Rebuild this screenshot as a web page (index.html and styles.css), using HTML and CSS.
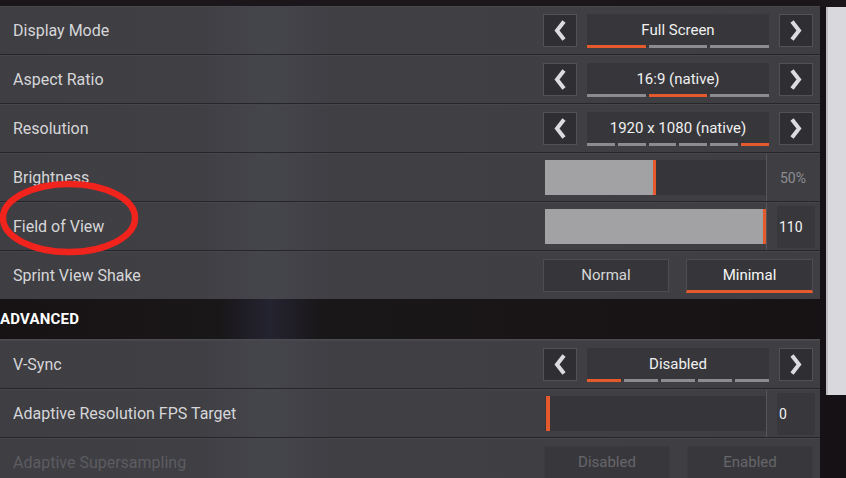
FILE: index.html
```html
<!DOCTYPE html>
<html lang="en">
<head>
  <meta charset="utf-8">
  <title>Video Settings</title>
  <link rel="stylesheet" href="styles.css">
</head>
<body>
  <div class="screen">
    <main class="settings">
      <div class="row">
        <span class="label">Display Mode</span>
        <div class="selector">
          <span class="arrow"><svg viewBox="0 0 12 20"><polyline points="10,1 3,10 10,19"/></svg></span>
          <div class="value">
            <span class="value-text">Full Screen</span>
            <div class="segments"><i class="on"></i><i></i><i></i></div>
          </div>
          <span class="arrow"><svg viewBox="0 0 12 20"><polyline points="2,1 9,10 2,19"/></svg></span>
        </div>
      </div>
      <div class="row">
        <span class="label">Aspect Ratio</span>
        <div class="selector">
          <span class="arrow"><svg viewBox="0 0 12 20"><polyline points="10,1 3,10 10,19"/></svg></span>
          <div class="value">
            <span class="value-text">16:9 (native)</span>
            <div class="segments"><i></i><i class="on"></i><i></i></div>
          </div>
          <span class="arrow"><svg viewBox="0 0 12 20"><polyline points="2,1 9,10 2,19"/></svg></span>
        </div>
      </div>
      <div class="row">
        <span class="label">Resolution</span>
        <div class="selector">
          <span class="arrow"><svg viewBox="0 0 12 20"><polyline points="10,1 3,10 10,19"/></svg></span>
          <div class="value">
            <span class="value-text">1920 x 1080 (native)</span>
            <div class="segments"><i></i><i></i><i></i><i></i><i></i><i class="on"></i></div>
          </div>
          <span class="arrow"><svg viewBox="0 0 12 20"><polyline points="2,1 9,10 2,19"/></svg></span>
        </div>
      </div>
      <div class="row">
        <span class="label">Brightness</span>
        <div class="slider">
          <div class="track"><div class="fill" style="width: 111px"></div></div>
          <div class="slider-value"><span class="num dim">50%</span></div>
        </div>
      </div>
      <div class="row">
        <span class="label">Field of View</span>
        <div class="slider">
          <div class="track"><div class="fill" style="width: 221px"></div></div>
          <div class="slider-value"><span class="num box">110</span></div>
        </div>
      </div>
      <div class="row last">
        <span class="label">Sprint View Shake</span>
        <div class="choice">
          <span class="option">Normal</span>
          <span class="option selected">Minimal</span>
        </div>
      </div>

      <h3 class="section">ADVANCED</h3>

      <div class="row">
        <span class="label">V-Sync</span>
        <div class="selector">
          <span class="arrow"><svg viewBox="0 0 12 20"><polyline points="10,1 3,10 10,19"/></svg></span>
          <div class="value">
            <span class="value-text">Disabled</span>
            <div class="segments"><i class="on"></i><i></i><i></i><i></i><i></i></div>
          </div>
          <span class="arrow"><svg viewBox="0 0 12 20"><polyline points="2,1 9,10 2,19"/></svg></span>
        </div>
      </div>
      <div class="row">
        <span class="label">Adaptive Resolution FPS Target</span>
        <div class="slider">
          <div class="track empty"><div class="fill" style="width: 5px"></div></div>
          <div class="slider-value"><span class="num box">0</span></div>
        </div>
      </div>
      <div class="row disabled">
        <span class="label">Adaptive Supersampling</span>
        <div class="choice">
          <span class="option">Disabled</span>
          <span class="option">Enabled</span>
        </div>
      </div>
    </main>
    <div class="scrollbar"><div class="thumb"></div></div>
  </div>

  <svg class="highlight" width="150" height="90" viewBox="0 0 150 90">
    <ellipse cx="70" cy="41" rx="66" ry="34"/>
  </svg>
</body>
</html>
```

FILE: styles.css
```css
body {
  margin: 0;
  background-color: #151114;
  font-family: Roboto, "DejaVu Sans", sans-serif;
  color: #d6d6d8;
  width: 846px;
  height: 478px;
  overflow: hidden;
  position: relative;
}
.screen {
  display: flex;
  gap: 6px;
  padding-top: 7px;
  background: linear-gradient(#1b1619 0, #1b1619 7px, transparent 7px);
}
.settings {
  width: 820px;
  flex: none;
}
.row {
  display: flex;
  align-items: center;
  height: 47px;
  margin-bottom: 2px;
  padding: 0 7px 0 13px;
  background: linear-gradient(90deg, #3e3e43 0, #3f3f44 200px, #45454c 270px, #3f3f44 330px, #3e3e43 100%);
  box-shadow: 0 1px 0 #26252a, 0 -1px 0 #46464b;
}
.row.last {
  margin-bottom: 0;
}
.label {
  flex: 1;
  font-size: 16px;
}
.selector {
  display: flex;
  align-items: flex-start;
  gap: 10px;
  height: 33px;
}
.arrow {
  width: 32px;
  height: 31px;
  border: 1px solid #515156;
  background-color: #2f2f33;
  display: flex;
  align-items: center;
  justify-content: center;
}
.arrow svg {
  width: 12px;
  height: 21px;
  fill: none;
  stroke: #dcdcdf;
  stroke-width: 4;
}
.value {
  width: 182px;
  height: 33px;
  display: flex;
  flex-direction: column;
  background-color: #37373b;
}
.value-text {
  flex: 1;
  min-height: 0;
  padding-top: 2px;
  text-align: center;
  font-size: 15px;
  line-height: 29px;
  color: #f0f0f0;
}
.segments {
  flex: none;
  display: flex;
  gap: 3px;
  height: 3px;
  margin-bottom: -1px;
}
.segments i {
  flex: 1;
  background-color: #8c8c90;
}
.segments i.on {
  background-color: #e55a2c;
}
.slider {
  display: flex;
  align-self: stretch;
  align-items: center;
  width: 270px;
  margin-right: -2px;
}
.track {
  width: 221px;
  height: 35px;
  background-color: #35353a;
}
.fill {
  height: 100%;
  background-color: #a2a2a4;
  border-right: 3px solid #e55a2c;
  box-sizing: border-box;
}
.track.empty .fill {
  background-color: transparent;
  border-right-width: 4px;
}
.slider-value {
  align-self: stretch;
  flex: 1;
  display: flex;
  align-items: center;
  border-left: 1px solid #56565b;
  padding-left: 10px;
}
.num {
  font-size: 14px;
}
.num.dim {
  color: #8e8e92;
  padding-left: 3px;
}
.num.box {
  width: 36px;
  height: 42px;
  line-height: 42px;
  padding-left: 2px;
  background-color: #38383c;
  color: #f2f2f2;
}
.choice {
  display: flex;
  gap: 17px;
}
.option {
  width: 124px;
  height: 31px;
  line-height: 31px;
  text-align: center;
  font-size: 15px;
  background-color: #36363a;
  border: 1px solid #4d4d52;
  color: #d6d6d8;
}
.option.selected {
  width: 125px;
  color: #f6f6f6;
  border-bottom: 3px solid #e55a2c;
  height: 30px;
}
.row.disabled .label {
  color: #5c5c61;
}
.row.disabled .option {
  background-color: #38383c;
  border-color: #3b3b3f;
  color: #66666b;
}
.section {
  margin: 0;
  height: 40px;
  line-height: 40px;
  font-size: 15px;
  font-weight: bold;
  color: #ffffff;
  letter-spacing: 0.2px;
  background: linear-gradient(90deg, #171315 0, #1a1719 220px, #242330 270px, #1a1719 320px, #171315 100%);
  border-bottom: 2px solid #4a4a50;
}
.scrollbar {
  width: 20px;
  flex: none;
}
.thumb {
  height: 388px;
  background-color: #d9d9dd;
  border-left: 2px solid #bdbdc2;
  box-sizing: border-box;
}
.highlight {
  position: absolute;
  left: -1px;
  top: 177px;
  fill: none;
  stroke: #f0241c;
  stroke-width: 6.5;
}
```
